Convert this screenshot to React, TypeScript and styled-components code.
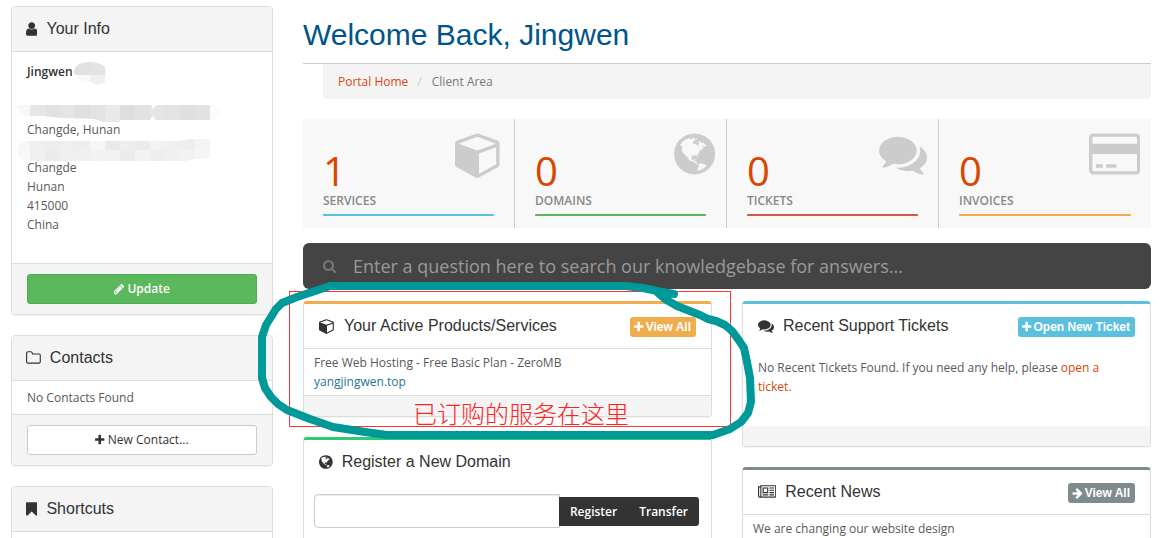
import React from "react";
import styled, { createGlobalStyle } from "styled-components";

const GlobalStyle = createGlobalStyle`
  *, *::before, *::after { box-sizing: border-box; }
  body {
    margin: 0;
    background: #fff;
    color: #58595b;
    font: 12px/19px "Open Sans", "Noto Sans CJK SC", sans-serif;
  }
  h1, h2, p, ul, ol, address { margin: 0; padding: 0; font-style: normal; }
  ul, ol { list-style: none; }
  button, input { font: inherit; }
`;

/* ---------- icons ---------- */

const ICONS = {
  user: { x: 256, w: 1280, d: "M1536 1399q0 109-62.500 187t-150.500 78h-854q-88 0-150.500-78t-62.500-187q0-85 8.500-160.500t31.500-152 58.500-131 94-89 134.500-34.500q131 128 313 128t313-128q76 0 134.500 34.500t94 89 58.500 131 31.500 152 8.500 160.500zm-256-887q0 159-112.500 271.500t-271.500 112.500-271.500-112.500-112.500-271.500 112.500-271.500 271.500-112.500 271.500 112.500 112.500 271.500z" },
  folder: { x: 64, w: 1664, d: "M1600 1312v-704q0-40-28-68t-68-28h-704q-40 0-68-28t-28-68v-64q0-40-28-68t-68-28h-320q-40 0-68 28t-28 68v960q0 40 28 68t68 28h1216q40 0 68-28t28-68zm128-704v704q0 92-66 158t-158 66h-1216q-92 0-158-66t-66-158v-960q0-92 66-158t158-66h320q92 0 158 66t66 158v32h672q92 0 158 66t66 158z" },
  bookmark: { x: 256, w: 1280, d: "M1420 128q23 0 44 9 33 13 52.500 41t19.500 62v1289q0 34-19.500 62t-52.500 41q-19 8-44 8-48 0-83-32l-441-424-441 424q-36 33-83 33-23 0-44-9-33-13-52.500-41t-19.500-62v-1289q0-34 19.500-62t52.500-41q21-9 44-9h1048z" },
  pencil: { x: 128, w: 1536, d: "M491 1536l91-91-235-235-91 91v107h128v128h107zm523-928q0-22-22-22-10 0-17 7l-542 542q-7 7-7 17 0 22 22 22 10 0 17-7l542-542q7-7 7-17zm-54-192l416 416-832 832h-416v-416zm683 96q0 53-37 90l-166 166-416-416 166-165q36-38 90-38 53 0 91 38l235 234q37 39 37 91z" },
  plus: { x: 192, w: 1408, d: "M1600 736v192q0 40-28 68t-68 28h-416v416q0 40-28 68t-68 28h-192q-40 0-68-28t-28-68v-416h-416q-40 0-68-28t-28-68v-192q0-40 28-68t68-28h416v-416q0-40 28-68t68-28h192q40 0 68 28t28 68v416h416q40 0 68 28t28 68z" },
  arrow: { x: 64, w: 1536, d: "M1600 960q0 54-37 91l-651 651q-39 37-91 37-51 0-90-37l-75-75q-38-38-38-91t38-91l293-293h-704q-52 0-84.500-37.500t-32.500-90.500v-128q0-53 32.500-90.500t84.500-37.500h704l-293-294q-38-36-38-90t38-90l75-75q38-38 90-38 53 0 91 38l651 651q37 35 37 90z" },
  search: { x: 64, w: 1664, d: "M1216 832q0-185-131.500-316.500t-316.500-131.500-316.500 131.500-131.500 316.500 131.500 316.500 316.500 131.500 316.500-131.500 131.500-316.500zm512 832q0 52-38 90t-90 38q-54 0-90-38l-343-342q-179 124-399 124-143 0-273.500-55.500t-225-150-150-225-55.500-273.500 55.500-273.500 150-225 225-150 273.500-55.500 273.500 55.500 225 150 150 225 55.500 273.500q0 220-124 399l343 343q37 37 37 90z" },
  news: { x: 0, w: 2048, d: "M1024 512h-384v384h384v-384zm128 640v128h-640v-128h640zm0-768v640h-640v-640h640zm640 768v128h-512v-128h512zm0-256v128h-512v-128h512zm0-256v128h-512v-128h512zm0-256v128h-512v-128h512zm-1536 960v-960h-128v960q0 26 19 45t45 19 45-19 19-45zm1664 0v-1088h-1536v1088q0 33-11 64h1483q26 0 45-19t19-45zm128-1216v1216q0 80-56 136t-136 56h-1664q-80 0-136-56t-56-136v-1088h256v-128h1792z" },
  cube: { x: 0, w: 1792, d: "M896 1629l640-349v-636l-640 233v752zm-64-865l698-254-698-254-698 254zm832-252v768q0 35-18 65t-49 47l-704 384q-28 16-61 16t-61-16l-704-384q-31-17-49-47t-18-65v-768q0-40 23-73t61-47l704-256q22-8 44-8t44 8l704 256q38 14 61 47t23 73z" },
  card: { x: 0, w: 1920, d: "M1760 128q66 0 113 47t47 113v1216q0 66-47 113t-113 47h-1600q-66 0-113-47t-47-113v-1216q0-66 47-113t113-47h1600zm-1600 128q-13 0-22.500 9.500t-9.500 22.500v224h1664v-224q0-13-9.500-22.500t-22.500-9.500h-1600zm1600 1280q13 0 22.500-9.500t9.500-22.500v-608h-1664v608q0 13 9.500 22.500t22.500 9.500h1600zm-1504-128v-128h256v128h-256zm384 0v-128h384v128h-384z" },
  comments: { x: 0, w: 1792, d: "M1408 768q0 139-94 257t-256.500 186.500-353.500 68.500q-86 0-176-16-124 88-278 128-36 9-86 16h-3q-11 0-20.500-8t-11.500-21q-1-3-1-6.500t.5-6.500 2-6l2.500-5 3.500-5.500 4-5 4.500-5 4-4.500q5-6 23-25t26-29.500 22.500-29 25-38.500 20.500-44q-124-72-195-177t-71-224q0-139 94-257t256.500-186.500 353.500-68.500 353.500 68.500 256.500 186.500 94 257zm384 256q0 120-71 224.500t-195 176.500q10 24 20.500 44t25 38.500 22.500 29 26 29.500 23 25q1 1 4 4.500t4.500 5 4 5 3.500 5.500l2.500 5 2 6 .5 6.500-1 6.500q-3 14-13 22t-22 7q-50-7-86-16-154-40-278-128-90 16-176 16-271 0-472-132 58 4 88 4 161 0 309-45t264-129q125-92 192-212t67-254q0-77-23-152 129 71 204 178t75 230z" },
  globe: { x: 128, w: 1536, d: "M896 128q209 0 385.500 103t279.500 279.500 103 385.500-103 385.500-279.500 279.500-385.500 103-385.500-103-279.500-279.500-103-385.500 103-385.500 279.500-279.500 385.500-103zm274 521q-2 1-9.500 9.500t-13.500 9.500q2 0 4.500-5t5-11 3.500-7q6-7 22-15 14-6 52-12 34-8 51 11-2-2 9.500-13t14.500-12q3-2 15-4.500t15-7.500l2-22q-12 1-17.500-7t-6.500-21q0 2-6 8 0-7-4.500-8t-11.500 1-9 1q-10-3-15-7.500t-8-16.500-4-15q-2-5-9.500-11t-9.500-10q-1-2-2.500-5.500t-3-6.500-4-5.500-5.500-2.500-7 5-7.500 10-4.500 5q-3-2-6-1.500t-4.500 1-4.500 3-5 3.500q-3 2-8.500 3t-8.500 2q15-5-1-11-10-4-16-3 9-4 7.500-12t-8.500-14h5q-1-4-8.500-8.500t-17.500-8.500-13-6q-8-5-34-9.500t-33-.5q-5 6-4.500 10.500t4 14 3.500 12.500q1 6-5.500 13t-6.500 12q0 7 14 15.500t10 21.500q-3 8-16 16t-16 12q-5 8-1.500 18.500t10.500 16.500q2 2 1.500 4t-3.500 4.500-5.500 4-6.500 3.500l-3 2q-11 5-20.500-6t-13.500-26q-7-25-16-30-23-8-29 1-5-13-41-26-25-9-58-4 6-1 0-15-7-15-19-12 3-6 4-17.500t1-13.500q3-13 12-23 1-1 7-8.500t9.500-13.500.5-6q35 4 50-11 5-5 11.500-17t10.500-17q9-6 14-5.500t14.500 5.500 14.500 5q14 1 15.500-11t-7.500-20q12 1 3-17-4-7-8-9-12-4-27 5-8 4 2 8-1-1-9.500 10.500t-16.500 17.500-16-5q-1-1-5.500-13.500t-9.500-13.500q-8 0-16 15 3-8-11-15t-24-8q19-12-8-27-7-4-20.500-5t-19.500 4q-5 7-5.500 11.500t5 8 10.500 5.500 11.500 4 8.500 3q14 10 8 14-2 1-8.500 3.500t-11.500 4.500-6 4q-3 4 0 14t-2 14q-5-5-9-17.500t-7-16.500q7 9-25 6l-10-1q-4 0-16 2t-20.500 1-13.500-8q-4-8 0-20 1-4 4-2-4-3-11-9.500t-10-8.500q-46 15-94 41 6 1 12-1 5-2 13-6.500t10-5.500q34-14 42-7l5-5q14 16 20 25-7-4-30-1-20 6-22 12 7 12 5 18-4-3-11.500-10t-14.500-11-15-5q-16 0-22 1-146 80-235 222 7 7 12 8 4 1 5 9t2.500 11 11.500-3q9 8 3 19 1-1 44 27 19 17 21 21 3 11-10 18-1-2-9-9t-9-4q-3 5 .5 18.500t10.500 12.500q-7 0-9.500 16t-2.500 35.500-1 23.500l2 1q-3 12 5.500 34.500t21.500 19.500q-13 3 20 43 6 8 8 9 3 2 12 7.500t15 10 10 10.500q4 5 10 22.500t14 23.500q-2 6 9.500 20t10.500 23q-1 0-2.500 1t-2.500 1q3 7 15.500 14t15.500 13q1 3 2 10t3 11 8 2q2-20-24-62-15-25-17-29-3-5-5.500-15.500t-4.500-14.500q2 0 6 1.500t8.500 3.500 7.500 4 2 3q-3 7 2 17.500t12 18.500 17 19 12 13q6 6 14 19.500t0 13.500q9 0 20 10.500t17 19.500q5 8 8 26t5 24q2 7 8.500 13.500t12.500 9.500l16 8 13 7q5 2 18.500 10.500t21.500 11.500q10 4 16 4t14.500-2.500 13.500-3.500q15-2 29 15t21 21q36 19 55 11-2 1 .5 7.500t8 15.500 9 14.500 5.500 8.500q5 6 18 15t18 15q6-4 7-9-3 8 7 20t18 10q14-3 14-32-31 15-49-18 0-1-2.500-5.500t-4-8.500-2.500-8.500 0-7.500 5-3q9 0 10-3.500t-2-12.500-4-13q-1-8-11-20t-12-15q-5 9-16 8t-16-9q0 1-1.500 5.500t-1.500 6.500q-13 0-15-1 1-3 2.500-17.500t3.500-22.500q1-4 5.500-12t7.500-14.500 4-12.500-4.500-9.500-17.500-2.500q-19 1-26 20-1 3-3 10.500t-5 11.500-9 7q-7 3-24 2t-24-5q-13-8-22.500-29t-9.500-37q0-10 2.500-26.500t3-25-5.500-24.500q3-2 9-9.500t10-10.500q2-1 4.500-1.500t4.500 0 4-1.500 3-6q-1-1-4-3-3-3-4-3 7 3 28.500-1.500t27.500 1.500q15 11 22-2 0-1-2.500-9.500t-.5-13.500q5 27 29 9 3 3 15.500 5t17.500 5q3 2 7 5.500t5.500 4.500 5-.5 8.500-6.500q10 14 12 24 11 40 19 44 7 3 11 2t4.500-9.500 0-14-1.500-12.500l-1-8v-18l-1-8q-15-3-18.500-12t1.500-18.500 15-18.500q1-1 8-3.500t15.500-6.500 12.500-8q21-19 15-35 7 0 11-9-1 0-5-3t-7.500-5-4.500-2q9-5 2-16 5-3 7.500-11t7.500-10q9 12 21 2 8-8 1-16 5-7 20.500-10.500t18.500-9.500q7 2 8-2t1-12 3-12q4-5 15-9t13-5l17-11q3-4 0-4 18 2 31-11 10-11-6-20 3-6-3-9.500t-15-5.500q3-1 11.500-.5t10.500-1.500q15-10-7-16-17-5-43 12zm-163 877q206-36 351-189-3-3-12.500-4.500t-12.500-3.500q-18-7-24-8 1-7-2.500-13t-8-9-12.500-8-11-7q-2-2-7-6t-7-5.500-7.500-4.500-8.500-2-10 1l-3 1q-3 1-5.500 2.500t-5.500 3-4 3 0 2.500q-21-17-36-22-5-1-11-5.500t-10.500-7-10-1.500-11.500 7q-5 5-6 15t-2 13q-7-5 0-17.500t2-18.500q-3-6-10.500-4.500t-12 4.500-11.500 8.500-9 6.500-8.500 5.500-8.500 7.500q-3 4-6 12t-5 11q-2-4-11.500-6.500t-9.500-5.500q2 10 4 35t5 38q7 31-12 48-27 25-29 40-4 22 12 26 0 7-8 20.500t-7 21.500q0 6 2 16z" },
};

type IconName = keyof typeof ICONS;

const Glyph = styled.svg`
  display: block;
  flex: none;
  fill: currentColor;
`;

function Icon({ name, size }: { name: IconName; size: number }) {
  const { x, w, d } = ICONS[name];
  return (
    <Glyph viewBox={`${x} 0 ${w} 1792`} width={(w / 1792) * size} height={size} aria-hidden="true">
      <path d={d} />
    </Glyph>
  );
}

/* ---------- page frame ---------- */

const Page = styled.div`
  position: relative;
  display: flex;
  gap: 30px;
  height: 100vh;
  overflow: hidden;
  padding: 6px 22px 0 11px;
`;

const Sidebar = styled.aside`
  flex: none;
  width: 262px;
  display: flex;
  flex-direction: column;
  gap: 20px;
`;

const Main = styled.main`
  flex: 1;
  min-width: 0;
`;

/* ---------- panels ---------- */

const Panel = styled.section<{ $accent?: string }>`
  flex: none;
  border: 1px solid #ddd;
  border-radius: 4px;
  background: #fff;
  box-shadow: 0 1px 1px rgba(0, 0, 0, 0.05);
  overflow: hidden;
  ${(p) => p.$accent && `border-top: 3px solid ${p.$accent};`}
`;

const PanelHead = styled.header<{ $shaded?: boolean; $line?: boolean }>`
  display: flex;
  align-items: center;
  justify-content: space-between;
  padding: ${(p) => (p.$shaded ? "10px 14px" : "10px 15px")};
  color: #333;
  background: ${(p) => (p.$shaded ? "#f4f4f4" : "#fff")};
  border-bottom: ${(p) => (p.$line ? "1px solid #ddd" : "0")};
`;

const PanelTitle = styled.h2`
  display: flex;
  align-items: center;
  gap: 9px;
  font: 400 16px/24px "Liberation Sans", Arial, sans-serif;
`;

const PanelBody = styled.div`
  position: relative;
  padding: 10px 15px 30px;
`;

const PanelRow = styled.div<{ $wide?: boolean }>`
  padding: ${(p) => (p.$wide ? "7px 15px" : "4px 10px")};
`;

const PanelFoot = styled.footer<{ $line?: boolean }>`
  box-sizing: content-box;
  min-height: 20px;
  background: #f4f4f4;
  border-top: ${(p) => (p.$line ? "1px solid #ddd" : "0")};
`;

const FootActions = styled.div`
  padding: 10px 15px;
`;

const BlockButton = styled.button<{ $primary?: boolean }>`
  display: flex;
  align-items: center;
  justify-content: center;
  gap: 3px;
  width: 100%;
  height: 30px;
  padding: 0 0 1px;
  border-radius: 3px;
  cursor: pointer;
  border: 1px solid ${(p) => (p.$primary ? "#4cae4c" : "#ccc")};
  background: ${(p) => (p.$primary ? "#5cb85c" : "#fff")};
  color: ${(p) => (p.$primary ? "#fff" : "#333")};
  font-weight: ${(p) => (p.$primary ? 600 : 400)};
`;

const TagButton = styled.button<{ $color: string }>`
  display: flex;
  align-items: center;
  gap: 2px;
  height: 20px;
  margin-top: 2px;
  padding: 0 5px 0 4px;
  border: 0;
  border-radius: 3px;
  background: ${(p) => p.$color};
  color: #fff;
  cursor: pointer;
  font: 700 12px/20px "Liberation Sans", Arial, sans-serif;
`;

const TextLink = styled.a<{ $blue?: boolean }>`
  color: ${(p) => (p.$blue ? "#1f7494" : "#d9480b")};
  text-decoration: none;
`;

/* ---------- client address ---------- */

const Address = styled.address`
  display: flex;
  flex-direction: column;
`;

const AddressLine = styled.span`
  min-height: 19px;
`;

const Name = styled.strong`
  font-weight: 600;
  color: #333;
`;

const AddressBody = styled(PanelBody)`
  padding-bottom: 29px;
`;

const NameLine = styled(AddressLine)`
  min-height: 20px;
`;

const Mosaic = styled.svg`
  position: absolute;
  top: 10px;
  left: 5px;
`;

const BLUR_TOP = ["#f7f7f7", "#e6e6e6", "#e2e2e2", "#e5e5e5", "#e0e0e0", "#e3e3e3", "#e9e9e9", "#dedede", "#e2e2e2", "#e5e5e5", "#e3e3e3", "#dfdfdf", "#e2e2e2", "#fcfcfc"];
const BLUR_MID = ["#f6f6f6", "#efefef", "#ededed", "#efefef", "#eeeeee", "#f6f6f6", "#e9e9e9", "#eeeeee", "#ebebeb", "#f2f2f2", "#f0f0f0", "#eeeeee", "#f4f4f4"];
const BLUR_LOW = ["#f8f8f8", "#efefef", "#ebebeb", "#f0f0f0", "#f0f0f0", "#f2f2f2", "#f1f1f1", "#ebebeb", "#f2f2f2", "#eeeeee", "#f0f0f0", "#f2f2f2", "#f5f5f5"];

function AddressMosaic() {
  return (
    <Mosaic width="210" height="102" aria-hidden="true">
      <clipPath id="nameBlob">
        <path d="M57 9Q59 0 73 0Q82 0 88 5V20Q84 24 77 22L73 20Q61 20 57 11Z" />
      </clipPath>
      <clipPath id="upperBlob">
        <path d="M0 43H134L136 47L140 43H200Q206 45 206 50Q204 57 196 58H139L136 54L133 58H103V60H86L78 57L46 56Q34 55 26 54H12Q2 53 0 43Z" />
      </clipPath>
      <clipPath id="lowerBlob">
        <path d="M10 79H160L175 77H193V96L180 97L168 99H12Q0 98 0 89Q2 80 10 79Z" />
      </clipPath>
      <g clipPath="url(#nameBlob)">
        <rect x="56" width="17" height="13" fill="#e1e1e1" />
        <rect x="73" width="15" height="13" fill="#e3e3e3" />
        <rect x="56" y="13" width="17" height="11" fill="#f9f9f9" />
        <rect x="73" y="13" width="15" height="11" fill="#efefef" />
      </g>
      <g clipPath="url(#upperBlob)">
        {BLUR_TOP.map((fill, i) => (
          <rect key={i} x={i * 15 - 2} y="43" width="15" height="18" fill={fill} />
        ))}
      </g>
      <g clipPath="url(#lowerBlob)">
        {BLUR_MID.map((fill, i) => (
          <rect key={i} x={i * 15 - 2} y="76" width="15" height="12" fill={fill} />
        ))}
        {BLUR_LOW.map((fill, i) => (
          <rect key={i} x={i * 15 - 2} y="88" width="15" height="12" fill={fill} />
        ))}
      </g>
    </Mosaic>
  );
}

/* ---------- page heading ---------- */

const Welcome = styled.h1`
  padding: 10px 0 9px;
  border-bottom: 1px solid #ccc;
  color: #058;
  font: 400 30px/38px "Liberation Sans", Arial, sans-serif;
`;

const Breadcrumb = styled.ol`
  display: flex;
  margin: 0 0 20px 20px;
  padding: 8px 15px;
  border-radius: 0 0 4px 4px;
  background: #f4f4f4;
  color: #777;
`;

const Crumb = styled.li`
  & + &::before {
    content: "/";
    padding: 0 10px 0 9px;
    color: #ccc;
  }
`;

/* ---------- stat tiles ---------- */

const Stats = styled.div`
  display: grid;
  grid-template-columns: repeat(4, 1fr);
  margin-bottom: 15px;
  background: #f8f8f8;
`;

const Stat = styled.div`
  display: grid;
  grid-template-columns: 1fr auto;
  padding: 11px 20px 12px;
  border-right: 1px solid #ccc;
  &:last-child { border-right: 0; }
`;

const StatIcon = styled.div`
  margin-right: -9px;
  height: 61px;
  color: #ccc;
`;

const StatValue = styled.div`
  padding-top: 21px;
  color: #d94600;
  font-size: 40px;
  line-height: 40px;
`;

const StatLabel = styled.div<{ $color: string }>`
  grid-column: 1 / -1;
  height: 25px;
  border-bottom: 2px solid ${(p) => p.$color};
  border-radius: 1px;
  color: #888;
  font-weight: 600;
`;

/* ---------- search ---------- */

const SearchBar = styled.label`
  display: flex;
  align-items: center;
  gap: 17px;
  height: 46px;
  margin-bottom: 12px;
  padding: 0 20px;
  border-radius: 6px;
  background: #444;
  color: #777;
`;

const SearchInput = styled.input`
  flex: 1;
  min-width: 0;
  padding: 0;
  border: 0;
  outline: 0;
  background: transparent;
  color: #fff;
  font-size: 18px;
  line-height: 26px;
  &::placeholder { color: #999; opacity: 1; }
`;

/* ---------- home panels ---------- */

const Columns = styled.div`
  display: grid;
  grid-template-columns: 1fr 1fr;
  gap: 30px;
`;

const Column = styled.div`
  display: flex;
  flex-direction: column;
  gap: 20px;
  min-width: 0;
`;

const DomainForm = styled.form`
  display: flex;
  align-items: center;
  padding: 10px 12px 10px 10px;
`;

const DomainInput = styled.input`
  flex: 1;
  min-width: 0;
  height: 34px;
  padding: 6px 12px;
  border: 1px solid #ccc;
  border-radius: 4px 0 0 4px;
  box-shadow: inset 0 1px 1px rgba(0, 0, 0, 0.08);
`;

const DomainButtons = styled.div`
  display: flex;
  height: 29px;
  margin-left: -1px;
  border-radius: 0 3px 3px 0;
  overflow: hidden;
`;

const DomainButton = styled.button`
  padding: 0 11px;
  border: 0;
  background: #333;
  color: #fff;
  font-weight: 600;
  cursor: pointer;
`;

/* ---------- hand-drawn annotation ---------- */

const Annotation = styled.figure`
  position: absolute;
  top: 282px;
  left: 258px;
  width: 497px;
  height: 158px;
  margin: 0;
  pointer-events: none;
`;

const RedBox = styled.figcaption`
  position: absolute;
  inset: 9px 24px 13px 31px;
  display: flex;
  align-items: flex-end;
  justify-content: center;
  padding-left: 22px;
  border: 1px solid #f33;
  color: #f22;
  font: 300 24px/26px "Noto Sans CJK SC", sans-serif;
`;

const Lasso = styled.svg`
  position: absolute;
  inset: 0;
  fill: none;
  stroke: #099;
  stroke-width: 8;
  stroke-linecap: round;
  stroke-linejoin: round;
`;

const STATS: { label: string; value: number; color: string; icon: IconName }[] = [
  { label: "SERVICES", value: 1, color: "#5bc0de", icon: "cube" },
  { label: "DOMAINS", value: 0, color: "#5cb85c", icon: "globe" },
  { label: "TICKETS", value: 0, color: "#d9534f", icon: "comments" },
  { label: "INVOICES", value: 0, color: "#f0ad4e", icon: "card" },
];

function Title({ icon, children }: { icon: IconName; children: React.ReactNode }) {
  return (
    <PanelTitle>
      <Icon name={icon} size={16} />
      {children}
    </PanelTitle>
  );
}

export default function App() {
  return (
    <Page>
      <GlobalStyle />
      <Sidebar>
        <Panel>
          <PanelHead $shaded $line>
            <Title icon="user">Your Info</Title>
          </PanelHead>
          <AddressBody>
            <Address>
              <NameLine><Name>Jingwen</Name></NameLine>
              <AddressLine />
              <AddressLine />
              <AddressLine>Changde, Hunan</AddressLine>
              <AddressLine />
              <AddressLine>Changde</AddressLine>
              <AddressLine>Hunan</AddressLine>
              <AddressLine>415000</AddressLine>
              <AddressLine>China</AddressLine>
            </Address>
            <AddressMosaic />
          </AddressBody>
          <PanelFoot $line>
            <FootActions>
              <BlockButton type="button" $primary>
                <Icon name="pencil" size={12} />
                Update
              </BlockButton>
            </FootActions>
          </PanelFoot>
        </Panel>
        <Panel>
          <PanelHead $shaded $line>
            <Title icon="folder">Contacts</Title>
          </PanelHead>
          <PanelRow $wide>No Contacts Found</PanelRow>
          <PanelFoot $line>
            <FootActions>
              <BlockButton type="button">
                <Icon name="plus" size={12} />
                New Contact...
              </BlockButton>
            </FootActions>
          </PanelFoot>
        </Panel>
        <Panel>
          <PanelHead $shaded $line>
            <Title icon="bookmark">Shortcuts</Title>
          </PanelHead>
          <PanelBody />
        </Panel>
      </Sidebar>

      <Main>
        <Welcome>Welcome Back, Jingwen</Welcome>
        <Breadcrumb>
          <Crumb><TextLink href="#home">Portal Home</TextLink></Crumb>
          <Crumb>Client Area</Crumb>
        </Breadcrumb>

        <Stats>
          {STATS.map((s) => (
            <Stat key={s.label}>
              <StatValue>{s.value}</StatValue>
              <StatIcon><Icon name={s.icon} size={48} /></StatIcon>
              <StatLabel $color={s.color}>{s.label}</StatLabel>
            </Stat>
          ))}
        </Stats>

        <SearchBar>
          <Icon name="search" size={14} />
          <SearchInput
            type="text"
            aria-label="Search the knowledgebase"
            placeholder="Enter a question here to search our knowledgebase for answers..."
          />
        </SearchBar>

        <Columns>
          <Column>
            <Panel $accent="#f0ad4e">
              <PanelHead $line>
                <Title icon="cube">Your Active Products/Services</Title>
                <TagButton type="button" $color="#f0ad4e">
                  <Icon name="plus" size={12} />
                  View All
                </TagButton>
              </PanelHead>
              <PanelRow>
                <p>Free Web Hosting - Free Basic Plan - ZeroMB</p>
                <p><TextLink $blue href="#product">yangjingwen.top</TextLink></p>
              </PanelRow>
              <PanelFoot $line />
            </Panel>
            <Panel $accent="#2ecc71">
              <PanelHead>
                <Title icon="globe">Register a New Domain</Title>
              </PanelHead>
              <DomainForm>
                <DomainInput type="text" aria-label="Domain name" />
                <DomainButtons>
                  <DomainButton type="button">Register</DomainButton>
                  <DomainButton type="button">Transfer</DomainButton>
                </DomainButtons>
              </DomainForm>
              <PanelFoot />
            </Panel>
          </Column>
          <Column>
            <Panel $accent="#5bc0de">
              <PanelHead>
                <Title icon="comments">Recent Support Tickets</Title>
                <TagButton type="button" $color="#5bc0de">
                  <Icon name="plus" size={12} />
                  Open New Ticket
                </TagButton>
              </PanelHead>
              <PanelBody>
                <p>
                  No Recent Tickets Found. If you need any help, please{" "}
                  <TextLink href="#ticket">open a ticket</TextLink>.
                </p>
              </PanelBody>
              <PanelFoot />
            </Panel>
            <Panel $accent="#7f8c8d">
              <PanelHead $line>
                <Title icon="news">Recent News</Title>
                <TagButton type="button" $color="#7f8c8d">
                  <Icon name="arrow" size={12} />
                  View All
                </TagButton>
              </PanelHead>
              <PanelRow>We are changing our website design</PanelRow>
            </Panel>
          </Column>
        </Columns>
      </Main>

      <Annotation>
        <RedBox>已订购的服务在这里</RedBox>
        <Lasso width="497" height="158" viewBox="258 282 497 158" aria-hidden="true">
          <path d="M674 294L662 292L643 288L625 286H330L312 292L297 297L282 303L276 309L271 317L266 325L262 337V378L265 388L271 397L278 404L287 410L310 419L333 427L365 432L387 435H713L730 429L741 422L748 413L751 402L750 378L747 362L744 348L738 339L732 331L725 325L716 321L708 319L700 315L677 306L665 299L658 293" />
        </Lasso>
      </Annotation>
    </Page>
  );
}
